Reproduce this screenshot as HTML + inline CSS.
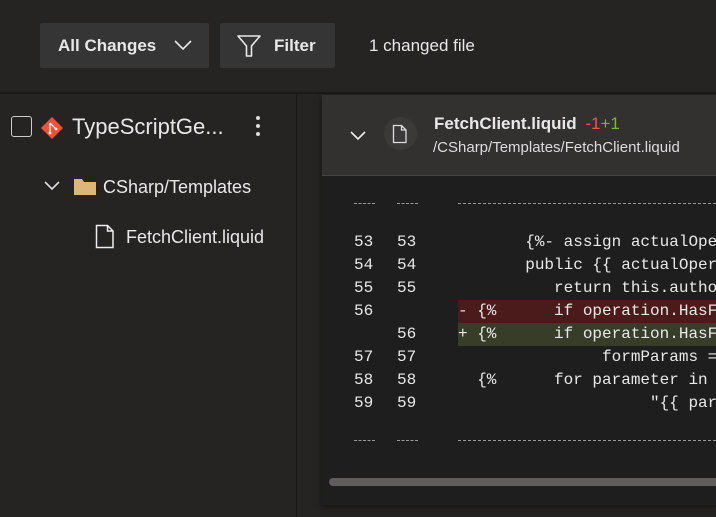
<!DOCTYPE html>
<html><head><style>
*{margin:0;padding:0;box-sizing:border-box}
body{width:716px;height:517px;overflow:hidden;background:#252423;font-family:"Liberation Sans","Segoe UI",sans-serif;color:#e8e8e8;position:relative}
.btn{position:absolute;top:23px;height:45px;background:#363535;border-radius:2px;font-size:17px;font-weight:bold;display:flex;align-items:center}
.abs{position:absolute}
.mono{position:absolute;left:0;top:0;width:716px;height:517px;overflow:hidden;font-family:"Liberation Mono","DejaVu Sans Mono",monospace;font-size:16px;white-space:pre;color:#e8e8e8}
.ln{position:absolute;left:0;width:716px;height:23px;line-height:23px;overflow:hidden}
</style></head><body>
<div class="btn" style="left:40px;width:169px;padding-left:18px">All Changes
<svg class="abs" style="left:134px;top:16px" width="18" height="12" viewBox="0 0 18 12"><path d="M1 2l8 8 8-8" stroke="#e8e8e8" stroke-width="1.6" fill="none"/></svg></div>
<div class="btn" style="left:220px;width:115px;padding-left:54px">Filter
<svg class="abs" style="left:16px;top:11px" width="26" height="24" viewBox="0 0 26 24"><path d="M2 2h22l-8.5 10v10h-5V12z" stroke="#e8e8e8" stroke-width="1.6" fill="none" stroke-linejoin="round"/></svg></div>
<div class="abs" style="left:369px;top:36px;font-size:17px">1 changed file</div>
<div class="abs" style="left:0;top:92px;width:716px;height:2px;background:#1b1a19"></div>
<div class="abs" style="left:296px;top:94px;width:1px;height:423px;background:#1b1a19"></div>
<div class="abs" style="left:11px;top:116px;width:21px;height:21px;border:1.5px solid #ccc;border-radius:3px"></div>
<svg class="abs" style="left:40px;top:116px" width="24" height="24" viewBox="0 0 24 24"><path d="M12 1l11 11-11 11L1 12z" fill="#f05133"/><path d="M10 7l6 6M10 7v10" stroke="#fff" stroke-width="1.3" fill="none"/><circle cx="10" cy="17" r="1.4" fill="#fff"/><circle cx="16" cy="13" r="1.4" fill="#fff"/></svg>
<div class="abs" style="left:72px;top:114px;font-size:22px">TypeScriptGe...</div>
<div class="abs" style="left:256px;top:116px;width:4px">
<div style="width:4px;height:4px;background:#ddd;border-radius:2px;margin-bottom:4px"></div><div style="width:4px;height:4px;background:#ddd;border-radius:2px;margin-bottom:4px"></div><div style="width:4px;height:4px;background:#ddd;border-radius:2px"></div></div>
<svg class="abs" style="left:43px;top:180px" width="18" height="12" viewBox="0 0 18 12"><path d="M2 2l7 7 7-7" stroke="#ddd" stroke-width="1.6" fill="none"/></svg>
<svg class="abs" style="left:73px;top:178px" width="24" height="18" viewBox="0 0 24 18"><path d="M1 1h8l2 3h12v13H1z" fill="#dcb67a"/></svg>
<div class="abs" style="left:103px;top:177px;font-size:18px">CSharp/Templates</div>
<svg class="abs" style="left:95px;top:224px" width="20" height="25" viewBox="0 0 20 25"><path d="M1.5 1.5h11l5.5 5.5v16.5H1.5z M12.5 1.5V7H18" stroke="#eee" stroke-width="1.5" fill="none"/></svg>
<div class="abs" style="left:126px;top:227px;font-size:18px">FetchClient.liquid</div>
<div class="abs" style="left:322px;top:95px;width:394px;height:410px;background:#1e1e1e;box-shadow:0 2px 6px rgba(0,0,0,.5)"></div>
<div class="abs" style="left:322px;top:95px;width:394px;height:81px;background:#323130;border-bottom:1px solid #444"></div>
<svg class="abs" style="left:349px;top:130px" width="18" height="12" viewBox="0 0 18 12"><path d="M2 2l7 7 7-7" stroke="#eee" stroke-width="1.6" fill="none"/></svg>
<div class="abs" style="left:384px;top:117px;width:33px;height:33px;border-radius:50%;background:#3b3a39"></div>
<svg class="abs" style="left:392px;top:124px" width="16" height="20" viewBox="0 0 16 20"><path d="M1.5 1.5h8l4.5 4.5v12.5H1.5z M9.5 1.5V6H14" stroke="#ddd" stroke-width="1.3" fill="none"/></svg>
<div class="abs" style="left:434px;top:114px;font-size:17px;font-weight:bold">FetchClient.liquid <span style="color:#e05a5a;font-weight:normal;margin-left:4px">-1</span><span style="color:#7cb342;font-weight:normal">+1</span></div>
<div class="abs" style="left:433px;top:139px;font-size:15px;color:#ddd">/CSharp/Templates/FetchClient.liquid</div>
<div class="abs" style="left:354px;top:203px;width:21px;border-top:1px dashed #999"></div>
<div class="abs" style="left:397px;top:203px;width:21px;border-top:1px dashed #999"></div>
<div class="abs" style="left:458px;top:203px;width:258px;border-top:1px dashed #999"></div>
<div class="abs" style="left:354px;top:440px;width:21px;border-top:1px dashed #999"></div>
<div class="abs" style="left:397px;top:440px;width:21px;border-top:1px dashed #999"></div>
<div class="abs" style="left:458px;top:440px;width:258px;border-top:1px dashed #999"></div>
<div class="abs" style="left:458px;top:300px;width:258px;height:23px;background:#4b1a1a"></div>
<div class="abs" style="left:458px;top:323px;width:258px;height:23px;background:#373d29"></div>
<div class="mono">
<div class="ln" style="top:231px"><span class="abs" style="left:354px">53</span><span class="abs" style="left:397px">53</span><span class="abs" style="left:458px">       {%- assign actualOperationName</span></div>
<div class="ln" style="top:254px"><span class="abs" style="left:354px">54</span><span class="abs" style="left:397px">54</span><span class="abs" style="left:458px">       public {{ actualOperationName</span></div>
<div class="ln" style="top:277px"><span class="abs" style="left:354px">55</span><span class="abs" style="left:397px">55</span><span class="abs" style="left:458px">          return this.authorize</span></div>
<div class="ln" style="top:300px"><span class="abs" style="left:354px">56</span><span class="abs" style="left:458px">- {%      if operation.HasFormParameters</span></div>
<div class="ln" style="top:323px"><span class="abs" style="left:397px">56</span><span class="abs" style="left:458px">+ {%      if operation.HasFormParameters</span></div>
<div class="ln" style="top:346px"><span class="abs" style="left:354px">57</span><span class="abs" style="left:397px">57</span><span class="abs" style="left:458px">               formParams = new</span></div>
<div class="ln" style="top:369px"><span class="abs" style="left:354px">58</span><span class="abs" style="left:397px">58</span><span class="abs" style="left:458px">  {%      for parameter in operation</span></div>
<div class="ln" style="top:392px"><span class="abs" style="left:354px">59</span><span class="abs" style="left:397px">59</span><span class="abs" style="left:458px">                    "{{ parameter.Name</span></div>
</div>
<div class="abs" style="left:329px;top:478px;width:387px;height:8px;border-radius:4px 0 0 4px;background:#5f5e5c"></div>
</body></html>
